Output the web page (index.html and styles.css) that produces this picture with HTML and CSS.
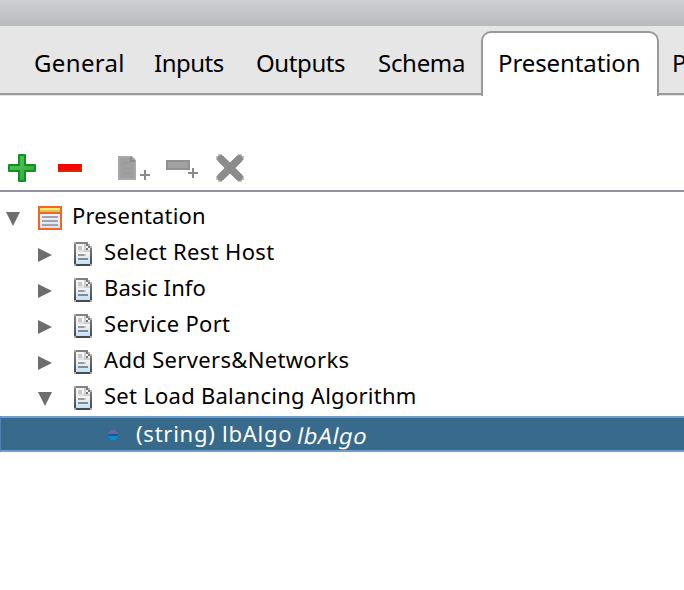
FILE: index.html
```
<!DOCTYPE html>
<html lang="en">
<head>
<meta charset="utf-8">
<title>Presentation</title>
<link rel="stylesheet" href="styles.css">
</head>
<body>
<svg class="defs" width="0" height="0" aria-hidden="true">
  <defs>
    <linearGradient id="page" x1="0" y1="0" x2="0" y2="1"><stop offset="0" stop-color="#f4f4f4"/><stop offset=".5" stop-color="#eef3f6"/><stop offset="1" stop-color="#bfe2f8"/></linearGradient>
    <linearGradient id="edge" gradientUnits="userSpaceOnUse" x1="0" y1="0" x2="0" y2="24"><stop offset="0" stop-color="#858585"/><stop offset="1" stop-color="#484848"/></linearGradient>
    <linearGradient id="form" x1="0" y1="0" x2="0" y2="1"><stop offset="0" stop-color="#fff"/><stop offset="1" stop-color="#d3e0f6"/></linearGradient>
    <linearGradient id="plus" x1="0" y1="0" x2="1" y2="1"><stop offset="0" stop-color="#4fc95a"/><stop offset=".5" stop-color="#43b94d"/><stop offset="1" stop-color="#27a233"/></linearGradient>
    <symbol id="doc" viewBox="0 0 18 24">
      <path d="M2 2h14v20H2z" fill="url(#page)"/>
      <path d="M2 0h12v2H2zM2 22h14v2H2zM0 2h2v20H0zM16 6h2v16h-2z" fill="url(#edge)"/>
      <path d="M0 0h2v2H0zM0 22h2v2H0zM16 22h2v2h-2z" fill="#aaa"/>
      <path d="M4 4h4v4H4z" fill="#c8c8c8"/><path d="M10 2h2v6h4v2h-6z" fill="#cfcfcf"/>
      <path d="M12 2h2v2h-2zM14 4h2v2h-2zM16 6h2v2h-2zM12 6h2v2h-2z" fill="#777"/><path d="M14 2h2v2h-2zM16 4h2v2h-2z" fill="#b0b0b0"/>
      <path d="M4 8h6v2H4z" fill="#e0e0e0"/><path d="M4 12h6v2H4z" fill="#9a9a9a"/><path d="M10 12h2v2h-2z" fill="#c5c5c5"/><path d="M4 16h10v2H4z" fill="#858b8f"/>
    </symbol>
  </defs>
</svg>
<div class="titlebar"></div>
<nav class="tabs">
  <span class="tab general">General</span>
  <span class="tab inputs">Inputs</span>
  <span class="tab outputs">Outputs</span>
  <span class="tab schema">Schema</span>
  <span class="tab active">Presentation</span>
  <span class="tab last">P</span>
</nav>
<div class="toolbar">
  <svg class="add" width="28" height="28" viewBox="0 0 28 28"><path d="M11 1h6v10h10v6H17v10h-6V17H1v-6h10z" fill="url(#plus)" stroke="#149022" stroke-width="2" stroke-linejoin="round"/></svg>
  <svg class="remove" width="24" height="8" viewBox="0 0 24 8"><path d="M0 0h24v8H0z" fill="#d42b00"/><path d="M0 0h22v6H0z" fill="#f80000"/></svg>
  <svg class="newdoc" width="32" height="24" viewBox="0 0 32 24"><path d="M0 0h14l4 4v20H0z" fill="#a8a8a8"/><path d="M2 2h12l2 3v17H2z" fill="#9f9f9f"/><path d="M4 5h6v3H4zM4 12h10v1H4zM4 17h10v1H4z" fill="#9a9a9a"/><path d="M13 1v4h4" fill="none" stroke="#8c8c8c" stroke-width="2"/><path d="M26 14h2v4h4v2h-4v4h-2v-4h-4v-2h4z" fill="#8a8a8a"/></svg>
  <svg class="newbar" width="32" height="20" viewBox="0 0 32 20"><path d="M1 1h22v8H1z" fill="#a2a2a2" stroke="#919191" stroke-width="2"/><path d="M26 8h2v4h4v2h-4v4h-2v-4h-4v-2h4z" fill="#8a8a8a"/></svg>
  <svg class="delete" width="28" height="28" viewBox="0 0 28 28"><path d="M2 0h4v2h2v2h2v2h2v2h4V6h2V4h2V2h2V0h4v2h2v4h-2v2h-2v2h-2v2h-2v4h2v2h2v2h2v2h2v4h-2v2h-4v-2h-2v-2h-2v-2h-2v-2h-4v2h-2v2H8v2H6v2H2v-2H0v-4h2v-2h2v-2h2v-2h2v-4H6v-2H4V8H2V6H0V2h2z" fill="#c4c4c4"/><path d="M5 5l18 18M23 5L5 23" stroke="#8c8c8c" stroke-width="7.500" stroke-linecap="round"/></svg>
</div>
<main class="tree">
  <div class="row root"><i class="arrow down"></i>
    <svg class="form" width="24" height="24" viewBox="0 0 24 24"><path d="M1 1h22v22H1z" fill="url(#form)"/><path d="M2 2h20v4H2z" fill="#f8ee73"/><path d="M2 4h20v2H2z" fill="#d6c660"/><path d="M1 1h22v22H1z" fill="none" stroke="#f46423" stroke-width="2"/><path d="M2 7h20" stroke="#f46423" stroke-width="2"/><path d="M4 11h16M4 15h16M4 19h16" stroke="#a2a4a8" stroke-width="2"/></svg>
    <span class="t-root">Presentation</span></div>
  <div class="row"><i class="arrow"></i><svg class="page" width="18" height="24"><use href="#doc"/></svg><span class="t-host">Select Rest Host</span></div>
  <div class="row"><i class="arrow"></i><svg class="page" width="18" height="24"><use href="#doc"/></svg><span class="t-info">Basic Info</span></div>
  <div class="row"><i class="arrow"></i><svg class="page" width="18" height="24"><use href="#doc"/></svg><span class="t-port">Service Port</span></div>
  <div class="row"><i class="arrow"></i><svg class="page" width="18" height="24"><use href="#doc"/></svg><span class="t-servers">Add Servers&amp;Networks</span></div>
  <div class="row"><i class="arrow down"></i><svg class="page" width="18" height="24"><use href="#doc"/></svg><span class="t-algo">Set Load Balancing Algorithm</span></div>
  <div class="row selected">
    <svg class="dot" width="10" height="10" viewBox="0 0 10 10"><path d="M2 0h6v2h2v2H0V2h2z" fill="#62699c"/><path d="M0 4h10v2H0z" fill="#294f95"/><path d="M0 6h10v2H8v2H2V8H0z" fill="#078cd2"/></svg>
    <span class="t-type">(string) lbAlgo</span><em>lbAlgo</em></div>
</main>
</body>
</html>
```
FILE: styles.css
```
* { box-sizing: border-box; }
body { margin: 0; height: 590px; overflow: hidden; background: #fff; color: #000; font-family: "Noto Sans", sans-serif; }
.defs { display: block; position: absolute; }
svg { display: block; flex: none; }
.titlebar { height: 26px; background: linear-gradient(#cfd0d4, #b9babe); }
.tabs { height: 70px; display: flex; background: linear-gradient(#999, #999) 0 67px / 100% 2px no-repeat, #e6e6e6; font-size: 24px; line-height: 33px; white-space: nowrap; }
.tab { flex: none; padding-top: 20px; }
.general { width: 120px; padding-left: 34px; letter-spacing: .35px; }
.inputs { width: 102px; padding-left: 34px; letter-spacing: -.5px; }
.outputs { width: 122px; padding-left: 34px; letter-spacing: -.4px; }
.schema { width: 137px; padding-left: 34px; letter-spacing: -.3px; }
.active { width: 178px; height: 65px; margin-top: 5px; padding: 13px 0 0 15px; background: #fff; border: 2px solid #999; border-bottom: 0; border-radius: 10px 10px 0 0; letter-spacing: -.1px; }
.last { padding-left: 13px; }
.toolbar { height: 96px; border-bottom: 2px solid #9192a0; display: flex; align-items: flex-start; padding-top: 58px; padding-left: 8px; }
.remove { margin: 10px 0 0 22px; }
.newdoc { margin: 2px 0 0 36px; }
.newbar { margin: 6px 0 0 16px; }
.delete { margin: 0 0 0 18px; }
.tree { padding-top: 8px; font-size: 22px; line-height: 30px; white-space: nowrap; }
.row { height: 36px; display: flex; align-items: flex-start; padding-left: 38px; }
.root { padding-left: 6px; }
.arrow { flex: none; width: 14px; height: 14px; margin-top: 12px; background: #6d6d6d; clip-path: polygon(0 0, 100% 50%, 0 100%); }
.arrow.down { clip-path: polygon(0 0, 100% 0, 50% 100%); }
.form { margin: 6px 10px 0 18px; }
.page { margin: 6px 12px 0 22px; }
.t-root { letter-spacing: .17px; }
.t-host { letter-spacing: .33px; }
.t-info { letter-spacing: .08px; }
.t-port { letter-spacing: .3px; }
.t-servers { letter-spacing: .33px; }
.t-algo { letter-spacing: .26px; }
.t-type { letter-spacing: .75px; }
.selected { background: #386a8c; border: solid #6f9fcf; border-width: 2px 0 2px 1px; border-left-color: #4f83b3; color: #fff; padding-left: 107px; line-height: 30px; }
.dot { margin: 12px 18px 0 0; }
em { margin: 2px 0 0 6px; font-style: normal; letter-spacing: .7px; transform: skewX(-12deg); }
```
